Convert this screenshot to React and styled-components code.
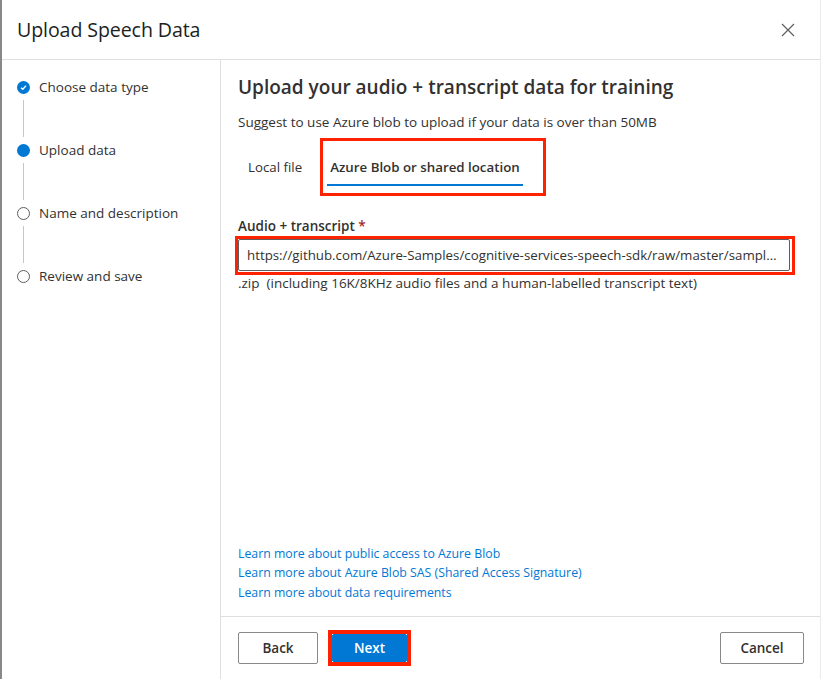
import React, { useState } from 'react';
import styled, { createGlobalStyle } from 'styled-components';

const GlobalStyle = createGlobalStyle`
  html, body {
    margin: 0;
    padding: 0;
    background: #ffffff;
  }
  body {
    font-family: "Segoe UI", "Open Sans", "Liberation Sans", sans-serif;
    color: #323130;
  }
  * { box-sizing: border-box; }
`;

const Panel = styled.div`
  width: 821px;
  height: 679px;
  display: flex;
  flex-direction: column;
  border-left: 2px solid #8a8886;
  border-right: 1px solid #edebe9;
  background: #fff;
`;

const Header = styled.div`
  height: 60px;
  flex-shrink: 0;
  display: flex;
  align-items: center;
  justify-content: space-between;
  padding: 0 22px 0 15px;
  border-bottom: 1px solid #e1dfdd;
`;

const Title = styled.h1`
  margin: 0;
  font-size: 19.6px;
  font-weight: 400;
  color: #201f1e;
  letter-spacing: -0.1px;
`;

const CloseButton = styled.button`
  width: 20px;
  height: 20px;
  padding: 0;
  border: none;
  background: none;
  display: flex;
  align-items: center;
  justify-content: center;
  cursor: pointer;
`;

const Body = styled.div`
  flex: 1;
  display: flex;
  min-height: 0;
`;

const Sidebar = styled.div`
  width: 219px;
  flex-shrink: 0;
  border-right: 1px solid #e1dfdd;
  padding: 20px 0 0 15px;
`;

const Step = styled.div`
  display: flex;
  align-items: center;
  gap: 9px;
  height: 14px;
  font-size: 13.5px;
  color: #323130;
`;

const Connector = styled.div`
  width: 1px;
  height: 37px;
  background: #c8c6c4;
  margin: 6px 0 6px 6px;
`;

const Dot = styled.span`
  width: 13px;
  height: 13px;
  border-radius: 50%;
  flex-shrink: 0;
  display: flex;
  align-items: center;
  justify-content: center;
  background: ${p => (p.$state === 'todo' ? '#fff' : '#0078d4')};
  border: ${p => (p.$state === 'todo' ? '1px solid #605e5c' : 'none')};
`;

const Main = styled.div`
  flex: 1;
  display: flex;
  flex-direction: column;
  min-width: 0;
`;

const Content = styled.div`
  flex: 1;
  padding: 14px 16px 0 17px;
  display: flex;
  flex-direction: column;
`;

const Heading = styled.h2`
  margin: 0;
  font-size: 19px;
  font-weight: 600;
  color: #323130;
  line-height: 26px;
`;

const Hint = styled.p`
  margin: 12px 0 0;
  font-size: 13.5px;
  line-height: 20px;
`;

const Tabs = styled.div`
  display: flex;
  align-items: center;
  gap: 15px;
  margin-top: 6px;
  padding-left: 7px;
`;

const Highlight = styled.div`
  border: 3px solid #ff2200;
  padding: ${p => p.$pad || '0'};
`;

const Tab = styled.button`
  border: none;
  background: none;
  padding: 0 3px;
  height: 44px;
  position: relative;
  font-family: inherit;
  font-size: 13.3px;
  font-weight: ${p => (p.$active ? 600 : 400)};
  color: #323130;
  cursor: pointer;
  &::after {
    content: '';
    display: ${p => (p.$active ? 'block' : 'none')};
    position: absolute;
    left: 0;
    right: 0;
    bottom: 3px;
    height: 2px;
    background: #0078d4;
  }
`;

const Field = styled.div`
  margin-top: 20px;
  display: flex;
  flex-direction: column;
`;

const Label = styled.label`
  font-size: 13.5px;
  font-weight: 600;
  line-height: 20px;
  span { color: #a4262c; }
`;

const InputWrap = styled(Highlight)`
  margin-left: -3px;
  width: 560px;
  padding: 0 2px 1px 0;
`;

const Input = styled.input`
  width: 100%;
  height: 32px;
  border: 1px solid #605e5c;
  border-radius: 2px;
  padding: 0 8px;
  font-family: inherit;
  font-size: 13.3px;
  color: #323130;
  text-overflow: ellipsis;
  outline: none;
`;

const Note = styled.div`
  font-size: 13.5px;
  line-height: 18px;
  margin-top: -1px;
`;

const Links = styled.div`
  margin-top: auto;
  padding-bottom: 14px;
  display: flex;
  flex-direction: column;
`;

const LinkItem = styled.a`
  font-size: 12.3px;
  line-height: 19.5px;
  color: #0078d4;
  text-decoration: none;
  cursor: pointer;
`;

const Footer = styled.div`
  height: 63px;
  flex-shrink: 0;
  border-top: 1px solid #e1dfdd;
  display: flex;
  align-items: center;
  padding: 0 16px 0 17px;
  gap: 10px;
`;

const Button = styled.button`
  height: ${p => p.$h || '32px'};
  min-width: ${p => p.$w || '80px'};
  padding: 0 16px;
  border-radius: 2px;
  font-family: inherit;
  font-size: 13.5px;
  font-weight: 600;
  cursor: pointer;
  display: block;
  border: 1px solid ${p => (p.$primary ? '#0078d4' : '#8a8886')};
  background: ${p => (p.$primary ? '#0078d4' : '#fff')};
  color: ${p => (p.$primary ? '#fff' : '#323130')};
  margin-left: ${p => (p.$push ? 'auto' : '0')};
`;

const NextBox = styled(Highlight)`
  border-width: 4px;
`;

const steps = [
  { label: 'Choose data type', state: 'done' },
  { label: 'Upload data', state: 'current' },
  { label: 'Name and description', state: 'todo' },
  { label: 'Review and save', state: 'todo' },
];

const links = [
  'Learn more about public access to Azure Blob',
  'Learn more about Azure Blob SAS (Shared Access Signature)',
  'Learn more about data requirements',
];

const App = () => {
  const [tab, setTab] = useState('blob');
  const [url, setUrl] = useState(
    'https://github.com/Azure-Samples/cognitive-services-speech-sdk/raw/master/sampledata/customspeech/en-US/training/audio-and-trans.zip'
  );

  return (
    <>
      <GlobalStyle />
      <Panel>
        <Header>
          <Title>Upload Speech Data</Title>
          <CloseButton aria-label="Close">
            <svg width="14" height="14" viewBox="0 0 14 14">
              <path d="M1 1 L13 13 M13 1 L1 13" stroke="#605e5c" strokeWidth="1.2" fill="none" />
            </svg>
          </CloseButton>
        </Header>
        <Body>
          <Sidebar>
            {steps.map((s, i) => (
              <React.Fragment key={s.label}>
                {i > 0 && <Connector />}
                <Step>
                  <Dot $state={s.state}>
                    {s.state === 'done' && (
                      <svg width="7" height="7" viewBox="0 0 8 8">
                        <path d="M1.2 4.2 L3.2 6 L6.8 2" stroke="#fff" strokeWidth="1.5" fill="none" />
                      </svg>
                    )}
                  </Dot>
                  {s.label}
                </Step>
              </React.Fragment>
            ))}
          </Sidebar>
          <Main>
            <Content>
              <Heading>Upload your audio + transcript data for training</Heading>
              <Hint>Suggest to use Azure blob to upload if your data is over than 50MB</Hint>
              <Tabs>
                <Tab $active={tab === 'local'} onClick={() => setTab('local')}>Local file</Tab>
                <Highlight $pad="4px 20px 4px 4px">
                  <Tab $active={tab === 'blob'} onClick={() => setTab('blob')}>Azure Blob or shared location</Tab>
                </Highlight>
              </Tabs>
              <Field>
                <Label>Audio + transcript <span>*</span></Label>
                <InputWrap>
                  <Input value={url} onChange={e => setUrl(e.target.value)} />
                </InputWrap>
                <Note>.zip&nbsp;&nbsp;(including 16K/8KHz audio files and a human-labelled transcript text)</Note>
              </Field>
              <Links>
                {links.map(l => (
                  <LinkItem key={l}>{l}</LinkItem>
                ))}
              </Links>
            </Content>
            <Footer>
              <Button>Back</Button>
              <NextBox>
                <Button $primary $w="75px" $h="28px">Next</Button>
              </NextBox>
              <Button $push $w="84px">Cancel</Button>
            </Footer>
          </Main>
        </Body>
      </Panel>
    </>
  );
};

export default App;
